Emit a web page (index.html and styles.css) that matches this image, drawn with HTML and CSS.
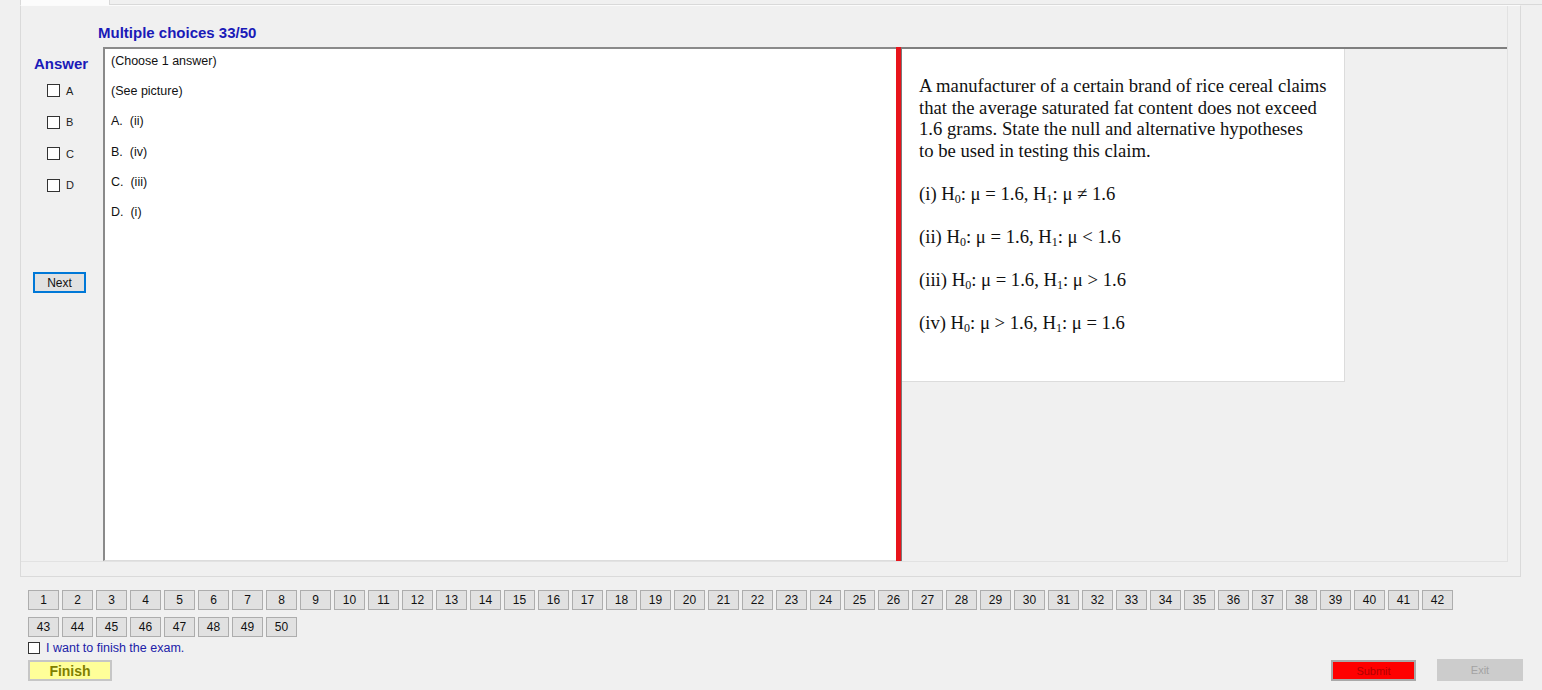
FILE: index.html
```html
<!DOCTYPE html>
<html>
<head>
<meta charset="utf-8">
<title>Exam</title>
<link rel="stylesheet" href="styles.css">
</head>
<body>
<div class="tabstrip"><div class="tab"></div><div class="tabline"></div></div>
<div class="tabpage">
  <div class="panel">
    <div class="title">Multiple choices 33/50</div>
    <div class="work">
      <div class="answers">
        <div class="answer-label">Answer</div>
        <ul class="choices">
          <li class="choice"><span class="box"></span><span>A</span></li>
          <li class="choice"><span class="box"></span><span>B</span></li>
          <li class="choice"><span class="box"></span><span>C</span></li>
          <li class="choice"><span class="box"></span><span>D</span></li>
        </ul>
        <button class="next">Next</button>
      </div>
      <div class="textbox">
        <p>(Choose 1 answer)</p>
        <p>(See picture)</p>
        <p>A.&nbsp; (ii)</p>
        <p>B.&nbsp; (iv)</p>
        <p>C.&nbsp; (iii)</p>
        <p>D.&nbsp; (i)</p>
      </div>
      <div class="splitter"></div>
      <div class="picture-panel">
        <div class="picture">
          <p>A manufacturer of a certain brand of rice cereal claims<br>that the average saturated fat content does not exceed<br>1.6 grams. State the null and alternative hypotheses<br>to be used in testing this claim.</p>
          <p class="hyp">(i) H<sub>0</sub>: μ = 1.6, H<sub>1</sub>: μ ≠ 1.6</p>
          <p class="hyp">(ii) H<sub>0</sub>: μ = 1.6, H<sub>1</sub>: μ &lt; 1.6</p>
          <p class="hyp">(iii) H<sub>0</sub>: μ = 1.6, H<sub>1</sub>: μ &gt; 1.6</p>
          <p class="hyp">(iv) H<sub>0</sub>: μ &gt; 1.6, H<sub>1</sub>: μ = 1.6</p>
        </div>
      </div>
    </div>
  </div>
</div>
<div class="nav">
  <button class="num">1</button><button class="num">2</button><button class="num">3</button><button class="num">4</button><button class="num">5</button><button class="num">6</button><button class="num">7</button><button class="num">8</button><button class="num">9</button><button class="num">10</button>
  <button class="num">11</button><button class="num">12</button><button class="num">13</button><button class="num">14</button><button class="num">15</button><button class="num">16</button><button class="num">17</button><button class="num">18</button><button class="num">19</button><button class="num">20</button>
  <button class="num">21</button><button class="num">22</button><button class="num">23</button><button class="num">24</button><button class="num">25</button><button class="num">26</button><button class="num">27</button><button class="num">28</button><button class="num">29</button><button class="num">30</button>
  <button class="num">31</button><button class="num">32</button><button class="num">33</button><button class="num">34</button><button class="num">35</button><button class="num">36</button><button class="num">37</button><button class="num">38</button><button class="num">39</button><button class="num">40</button>
  <button class="num">41</button><button class="num">42</button><button class="num">43</button><button class="num">44</button><button class="num">45</button><button class="num">46</button><button class="num">47</button><button class="num">48</button><button class="num">49</button><button class="num">50</button>
</div>
<div class="confirm"><span class="box small"></span><span>I want to finish the exam.</span></div>
<div class="actions">
  <button class="finish">Finish</button>
  <button class="submit">Submit</button>
  <button class="exit">Exit</button>
</div>
</body>
</html>
```
FILE: styles.css
```css
html, body {
  margin: 0;
  padding: 0;
}
body {
  background: #f0f0f0;
  font-family: "Liberation Sans", Arial, sans-serif;
  color: #000;
  width: 1542px;
  height: 690px;
  overflow: hidden;
}
button {
  font-family: "Liberation Sans", Arial, sans-serif;
  padding: 0;
  margin: 0;
  box-sizing: border-box;
  cursor: default;
}

/* tab strip */
.tabstrip {
  display: flex;
  height: 5px;
}
.tab {
  width: 90px;
  margin-left: 20px;
  box-sizing: border-box;
  background: #fcfcfc;
  border-left: 1px solid #d9d9d9;
  border-right: 1px solid #d9d9d9;
}
.tabline {
  flex: 1;
  border-bottom: 1px solid #d9d9d9;
}

.tabpage {
  margin-left: 20px;
  width: 1501px;
  height: 572px;
  box-sizing: border-box;
  border: 1px solid #dadada;
  border-top: 1px solid #fbfbfb;
}
.panel {
  width: 1487px;
  height: 556px;
  box-sizing: border-box;
  border-right: 1px solid #e2e2e2;
  border-bottom: 1px solid #e2e2e2;
}
.title {
  height: 41px;
  box-sizing: border-box;
  padding: 18px 0 0 77px;
  font-weight: bold;
  font-size: 15px;
  line-height: 17px;
  color: #1a1ab8;
}
.work {
  display: flex;
  height: 514px;
}

/* answers column */
.answers {
  width: 82px;
  flex: none;
  display: flex;
  flex-direction: column;
  align-items: flex-start;
}
.answer-label {
  margin: 8px 0 0 13px;
  font-weight: bold;
  font-size: 15px;
  line-height: 17px;
  color: #1a1ab8;
}
.choices {
  list-style: none;
  margin: 12px 0 0 26px;
  padding: 0;
  display: flex;
  flex-direction: column;
  gap: 18.5px;
}
.choice {
  display: flex;
  align-items: center;
  gap: 6px;
  height: 13px;
  font-size: 11px;
  color: #222;
}
.box {
  display: block;
  width: 13px;
  height: 13px;
  box-sizing: border-box;
  border: 1px solid #333;
  background: #fff;
  flex: none;
}
.box.small {
  width: 12px;
  height: 12px;
}
.next {
  margin: 80.5px 0 0 12px;
  width: 53px;
  height: 21px;
  border: 2px solid #0078d7;
  background: #e1e1e1;
  font-size: 12px;
  color: #111;
}

/* question textbox */
.textbox {
  width: 793px;
  flex: none;
  box-sizing: border-box;
  background: #fff;
  border-top: 2px solid #8a8a8a;
  border-left: 2px solid #8a8a8a;
  border-bottom: 1px solid #dcdcdc;
  padding: 3px 0 0 6px;
  display: flex;
  flex-direction: column;
  gap: 12.2px;
  font-size: 12.5px;
  line-height: 18px;
  color: #111;
}
.textbox p {
  margin: 0;
}

.splitter {
  width: 6px;
  flex: none;
  box-sizing: border-box;
  background: #e8141b;
  border-right: 1px solid #7a7a7a;
}

/* picture */
.picture-panel {
  flex: 1;
  border-top: 2px solid #7f7f7f;
}
.picture {
  width: 443px;
  height: 333px;
  box-sizing: border-box;
  background: #fff;
  border-right: 1px solid #dcdcdc;
  border-bottom: 1px solid #dcdcdc;
  padding: 26px 0 0 17px;
  font-family: "Liberation Serif", "Times New Roman", serif;
  font-size: 18.67px;
  line-height: 21.5px;
  color: #111;
}
.picture p {
  margin: 0;
  white-space: nowrap;
}
.picture .hyp {
  margin-top: 21.5px;
}
.picture sub {
  font-size: 12px;
  line-height: 0;
  vertical-align: -3px;
}

/* navigation */
.nav {
  display: flex;
  flex-wrap: wrap;
  width: 1428px;
  margin: 13px 0 0 28px;
  gap: 7px 3px;
}
.num {
  width: 31px;
  height: 20px;
  border: 1px solid #adadad;
  background: #e1e1e1;
  font-size: 12px;
  color: #111;
}

.confirm {
  display: flex;
  align-items: center;
  gap: 6px;
  margin: 4px 0 0 28px;
  height: 13px;
  font-size: 12.5px;
  color: #2020a8;
}

.actions {
  display: flex;
  align-items: flex-start;
  width: 1495px;
  margin: 5px 0 0 28px;
}
.finish {
  width: 84px;
  height: 21px;
  margin-top: 1px;
  border: 2px solid #c6c6c6;
  background: #ffff99;
  font-weight: bold;
  font-size: 14px;
  color: #808000;
}
.submit {
  margin-left: auto;
  margin-top: 1px;
  width: 85px;
  height: 21px;
  border: 2px solid #a9a9a9;
  background: #ff0000;
  font-size: 11px;
  color: #b00000;
}
.exit {
  margin-left: 21px;
  width: 86px;
  height: 22px;
  border: none;
  background: #cccccc;
  font-size: 11px;
  color: #a3a3a3;
}
```
